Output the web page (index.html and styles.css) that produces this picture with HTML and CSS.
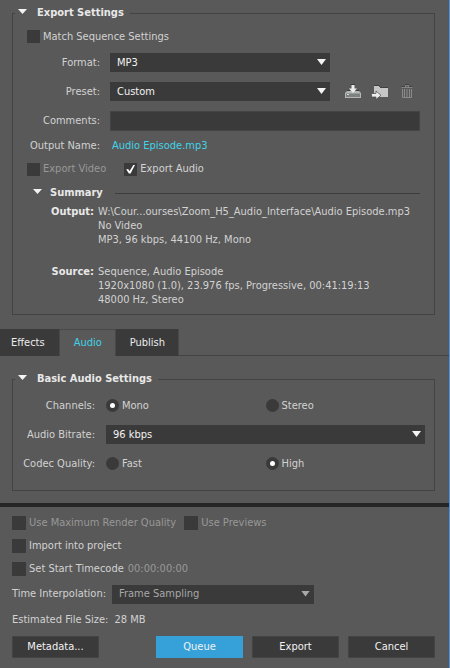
FILE: index.html
```html
<!DOCTYPE html>
<html lang="en">
<head>
<meta charset="utf-8">
<meta name="viewport" content="width=device-width, initial-scale=1">
<title>Export Settings</title>
<link rel="stylesheet" href="styles.css">
</head>
<body>
<form class="dialog">
  <fieldset class="group">
    <legend class="legend"><span class="arrow"></span>Export Settings</legend>
    <div class="row row-first"><label class="check"><input type="checkbox">Match Sequence Settings</label></div>
    <div class="row field">
      <label class="name" for="format">Format:</label>
      <div class="select"><select id="format"><option>MP3</option></select></div>
    </div>
    <div class="row field">
      <label class="name" for="preset">Preset:</label>
      <div class="select"><select id="preset"><option>Custom</option></select></div>
      <div class="tools">
        <button type="button" class="tool" aria-label="Save preset">
          <svg width="18" height="16" viewBox="0 0 18 16"><path d="M3 7h12l2 2v5H1V9z" fill="#b4b6b6"/><path d="M2 9.500h14V13H2z" fill="#7c8080"/><path d="M3 10.500h2" stroke="#d8d8d8"/><path d="M3 6.500h3M12 6.500h3M7 .500h4" stroke="#3c3c3c"/><path d="M7.500 1h3v3.500H13L9 9 5 4.500h2.500z" fill="#ececec"/></svg>
        </button>
        <button type="button" class="tool" aria-label="Import preset">
          <svg width="18" height="16" viewBox="0 0 18 16"><path d="M3 2h5l1.500 2H17v9H3z" fill="#c6c6c6"/><path d="M3 1.500h5l1.500 2H17" fill="none" stroke="#404040"/><path d="M.500 9.500H5V7l5 4.250L5 15.500V13H.500z" fill="#ececec" stroke="#484848" stroke-width=".7"/></svg>
        </button>
        <button type="button" class="tool" aria-label="Delete preset">
          <svg width="18" height="16" viewBox="0 0 18 16"><path d="M3.500 3.500h11M7.500 3V1.500h3V3" fill="none" stroke="#858585"/><path d="M4.500 5v8.500h9V5M6.500 5v8M9 5v8M11.500 5v8" fill="none" stroke="#8b8b8b"/><path d="M3.500 2.500H7M11 2.500h3.500M7 .500h4" stroke="#404040"/></svg>
        </button>
      </div>
    </div>
    <div class="row field">
      <label class="name" for="comments">Comments:</label>
      <input class="text" id="comments" type="text">
    </div>
    <div class="row field row-output">
      <span class="name">Output Name:</span>
      <a class="link" href="#output">Audio Episode.mp3</a>
    </div>
    <div class="row row-pair">
      <label class="check dim"><input type="checkbox" disabled>Export Video</label>
      <label class="check"><input type="checkbox" checked>Export Audio</label>
    </div>
    <h2 class="summary-title"><span class="arrow"></span>Summary</h2>
    <dl class="summary">
      <dt>Output:</dt>
      <dd>W:\Cour...ourses\Zoom_H5_Audio_Interface\Audio Episode.mp3<br>No Video<br>MP3, 96 kbps, 44100 Hz, Mono</dd>
      <dt>Source:</dt>
      <dd>Sequence, Audio Episode<br>1920x1080 (1.0), 23.976 fps, Progressive, 00:41:19:13<br>48000 Hz, Stereo</dd>
    </dl>
  </fieldset>

  <div class="tabs" role="tablist">
    <button type="button" class="tab" role="tab">Effects</button>
    <button type="button" class="tab active" role="tab" aria-selected="true">Audio</button>
    <button type="button" class="tab" role="tab">Publish</button>
  </div>

  <fieldset class="group audio">
    <legend class="legend"><span class="arrow"></span>Basic Audio Settings</legend>
    <div class="row field" role="radiogroup" aria-labelledby="channels">
      <span class="name" id="channels">Channels:</span>
      <div class="radios">
        <label class="check"><input type="radio" name="channels" checked>Mono</label>
        <label class="check"><input type="radio" name="channels">Stereo</label>
      </div>
    </div>
    <div class="row field">
      <label class="name" for="bitrate">Audio Bitrate:</label>
      <div class="select"><select id="bitrate"><option>96 kbps</option></select></div>
    </div>
    <div class="row field" role="radiogroup" aria-labelledby="quality">
      <span class="name" id="quality">Codec Quality:</span>
      <div class="radios">
        <label class="check"><input type="radio" name="quality">Fast</label>
        <label class="check"><input type="radio" name="quality" checked>High</label>
      </div>
    </div>
  </fieldset>

  <footer class="footer">
    <div class="row options">
      <label class="check dim"><input type="checkbox" disabled>Use Maximum Render Quality</label>
      <label class="check dim"><input type="checkbox" disabled>Use Previews</label>
    </div>
    <div class="row options"><label class="check"><input type="checkbox">Import into project</label></div>
    <div class="row options timecode">
      <label class="check"><input type="checkbox">Set Start Timecode</label>
      <span class="dim">00:00:00:00</span>
    </div>
    <div class="row interpolation">
      <label for="interpolation">Time Interpolation:</label>
      <div class="select"><select id="interpolation" disabled><option>Frame Sampling</option></select></div>
    </div>
    <div class="row size"><span>Estimated File Size:</span><span>28 MB</span></div>
    <div class="actions">
      <button type="button" class="button first">Metadata...</button>
      <button type="button" class="button primary">Queue</button>
      <button type="button" class="button">Export</button>
      <button type="button" class="button">Cancel</button>
    </div>
  </footer>
</form>
</body>
</html>
```
FILE: styles.css
```css
* { box-sizing: border-box; }

body {
  margin: 0;
  background: #595959;
  color: #d2d2d2;
  font: 11px/14px "DejaVu Sans Condensed", "Noto Sans", sans-serif;
}

button, input, select { font: inherit; color: inherit; margin: 0; border-radius: 0; }

.dialog {
  min-height: 100vh;
  padding-top: 6px;
  border-right: 1px solid #4a90e2;
}

.group {
  min-width: 0;
  margin: 0 14px 0 12px;
  padding: 5px 14px 7px;
  border: 1px solid #434343;
}

.legend {
  display: flex;
  align-items: center;
  gap: 10px;
  height: 14px;
  margin-left: -12px;
  padding: 0 6px 0 3px;
  color: #e8e8e8;
  font-weight: bold;
}

.arrow {
  width: 9px;
  height: 5px;
  margin-bottom: 3px;
  background: #f4f4f4;
  clip-path: polygon(0 0, 100% 0, 50% 100%);
}

.row { display: flex; align-items: center; height: 29px; white-space: nowrap; }
.row-first { height: 23px; }
.row-output { height: 22px; }
.row-pair { height: 24px; gap: 18px; }

.field { gap: 10px; }
.name { flex: 0 0 73px; text-align: right; white-space: nowrap; }
.field .text, .field .select, .radios { flex: 1; min-width: 0; }
.field > .select:last-child { margin-right: 90px; }

.select { position: relative; color: #f2f2f2; }
.select select {
  display: block;
  width: 100%;
  height: 19px;
  padding: 0 20px 0 7px;
  border: 0;
  background: #3a3a3a;
  appearance: none;
}
.select::after {
  content: "";
  position: absolute;
  top: 6px;
  right: 4px;
  width: 9px;
  height: 6px;
  background: #f4f4f4;
  clip-path: polygon(0 0, 100% 0, 50% 100%);
  pointer-events: none;
}

.text { height: 20px; padding: 0 6px; border: 1px solid #444; background: #3a3a3a; }

.tools { display: flex; flex: 0 0 80px; gap: 9px; padding-left: 4px; }
.tool { width: 18px; height: 16px; padding: 0; border: 0; background: none; }
.tool svg { display: block; }

.link { padding-left: 2px; color: #41d3e8; text-decoration: none; }

.check { display: flex; align-items: center; gap: 3px; }
.dim { color: #989898; }
.check input {
  display: grid;
  place-items: center;
  width: 13px;
  height: 13px;
  background: #3a3a3a;
  appearance: none;
}
.check input[type="radio"] { border-radius: 50%; }
.check input[type="radio"]:checked::before {
  content: "";
  width: 5px;
  height: 5px;
  border-radius: 50%;
  background: #fff;
}
.check input[type="checkbox"]:checked::before {
  content: "";
  width: 9px;
  height: 9px;
  background: #fff;
  clip-path: polygon(0 55%, 20% 50%, 38% 72%, 82% 0, 100% 0, 48% 100%, 30% 100%);
}

.summary-title {
  display: flex;
  align-items: center;
  height: 24px;
  margin: 0 0 0 6px;
  gap: 8px;
  color: #e8e8e8;
  font-size: 11px;
}
.summary-title::after { content: ""; flex: 1; margin-left: 4px; border-top: 1px solid #3d3d3d; }

.summary {
  display: grid;
  grid-template-columns: 67px 1fr;
  gap: 18px 4px;
  margin: 0;
  white-space: nowrap;
}
.summary dt { text-align: right; font-weight: bold; color: #e8e8e8; }
.summary dd { margin: 0; }

.tabs {
  display: flex;
  height: 27px;
  margin: 14px 0 16px;
  background: linear-gradient(#434343, #434343) bottom / 100% 1px no-repeat;
}
.tab {
  padding: 0 13px 0 14px;
  border: 0;
  border-right: 1px solid #484848;
  background: #3a3a3a;
  color: #ececec;
}
.tab:first-child { padding: 0 14px 0 11px; }
.tab.active { border-top: 1px solid #484848; background: #595959; color: #41d3e8; }

.audio { padding: 5px 9px 12px 10px; }
.audio .legend { margin-left: -8px; }
.audio .name { flex-basis: 72px; }
.audio .field { gap: 11px; }
.audio .field > .select:last-child { margin-right: 0; }
.radios { display: grid; grid-template-columns: 1fr 1fr; }

.footer { margin-top: 12px; padding: 4px 14px 11px 12px; border-top: 4px solid #262626; }
.footer .check input { width: 14px; height: 14px; }
.options { height: 23px; gap: 8px; }
.timecode { gap: 4px; }
.interpolation { height: 28px; gap: 6px; }
.interpolation .select { flex: 0 1 202px; color: #a8a8a8; }
.interpolation select { opacity: 1; }
.interpolation .select::after { background: #a8a8a8; }
.size { height: 24px; gap: 6px; }

.actions { display: flex; gap: 9px; margin-top: 4px; }
.button {
  flex: 0 1 87px;
  height: 22px;
  padding: 0;
  border: 1px solid #444;
  background: #3a3a3a;
  color: #f2f2f2;
}
.button.first { margin-right: auto; }
.button.primary { border-color: #36a1d8; background: #36a1d8; }
```
